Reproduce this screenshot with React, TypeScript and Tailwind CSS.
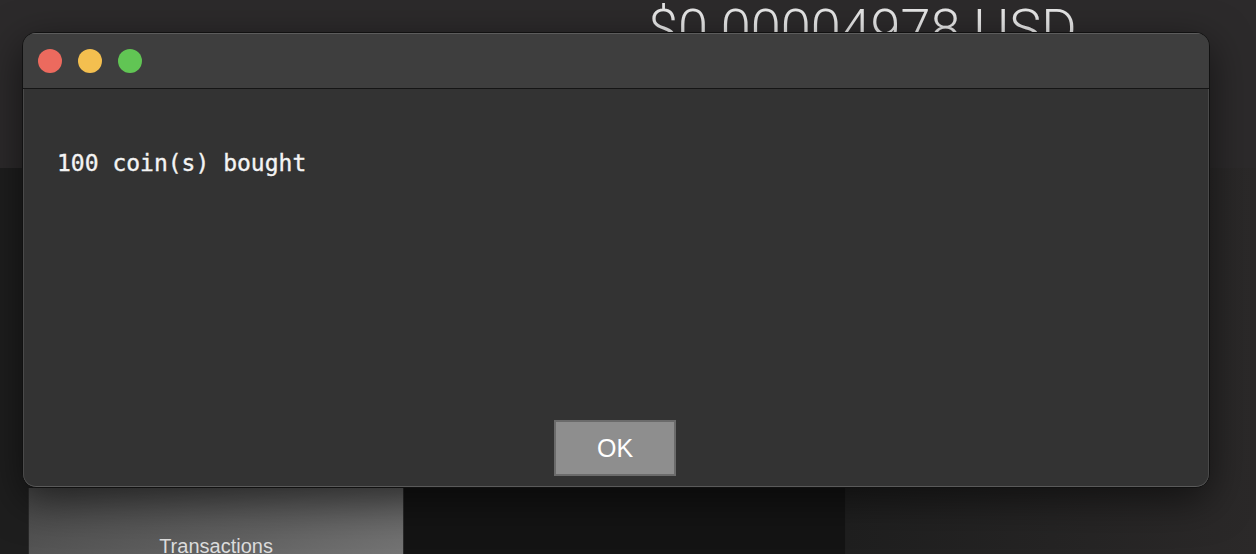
import React from "react";

export default function App() {
  return (
    <div className="relative w-[1256px] h-[554px] overflow-hidden bg-[#2c2a2b]" style={{ fontFamily: '"Liberation Sans", Arial, sans-serif' }}>
      {/* background app */}
      <div className="h-[168px] pl-[648px] pt-[2px]">
        <div className="text-[54px] leading-none font-light text-[#e6e6e6] whitespace-nowrap" style={{ fontFamily: 'Roboto, "Liberation Sans", sans-serif' }}>
          $0.00004978 USD
        </div>
      </div>
      <div className="flex h-[386px]">
        <div className="w-[846px] bg-[#1e1e1e] flex flex-col justify-end">
          <div className="flex pl-[28px] h-[66px] items-start">
            <div className="w-[376px] h-[120px] flex justify-center border-l border-r border-[#2a2a2a] bg-gradient-to-br from-[#464646] via-[#616161] to-[#858585]">
              <span className="mt-[48px] text-[20px] leading-[20px] text-[#dcdcdc]">Transactions</span>
            </div>
            <div className="w-[441px] h-[120px] bg-[#141414]" />
          </div>
        </div>
        <div className="flex-1 bg-gradient-to-r from-[#1f1f1f] to-[#2b2929]" />
      </div>

      {/* dialog overlay */}
      <div className="absolute left-[22px] top-[32px] w-[1188px] h-[456px] rounded-[14px] border border-[#111111] bg-[#333333] shadow-[0_12px_40px_rgba(0,0,0,0.55)] flex flex-col overflow-hidden">
        <div className="h-[56px] bg-[#3e3e3e] border-b border-[#151515] shadow-[inset_0_1px_0_#5c5c5c] flex items-center pl-[15px] gap-[16px] shrink-0">
          <span className="w-[24px] h-[24px] rounded-full bg-[#ec6a5e]" />
          <span className="w-[24px] h-[24px] rounded-full bg-[#f4bf4f]" />
          <span className="w-[24px] h-[24px] rounded-full bg-[#61c554]" />
        </div>
        <div className="flex-1 flex flex-col rounded-b-[13px] shadow-[inset_1px_0_0_#4a4a4a,inset_-1px_0_0_#4a4a4a,inset_0_-1px_0_#5a5a5a]">
          <div className="pt-[60px] pl-[34px] text-[23px] leading-[28px] text-[#f4f4f4] [-webkit-text-stroke:0.35px_#f4f4f4]" style={{ fontFamily: '"DejaVu Sans Mono", monospace' }}>
            100 coin(s) bought
          </div>
          <div className="flex-1" />
          <div className="flex justify-center pb-[11px] pr-[2px]">
            <button className="w-[122px] h-[56px] bg-[#8e8e8e] border-2 border-[#6b6b6b] text-white text-[25px] leading-none">
              OK
            </button>
          </div>
        </div>
      </div>
    </div>
  );
}
